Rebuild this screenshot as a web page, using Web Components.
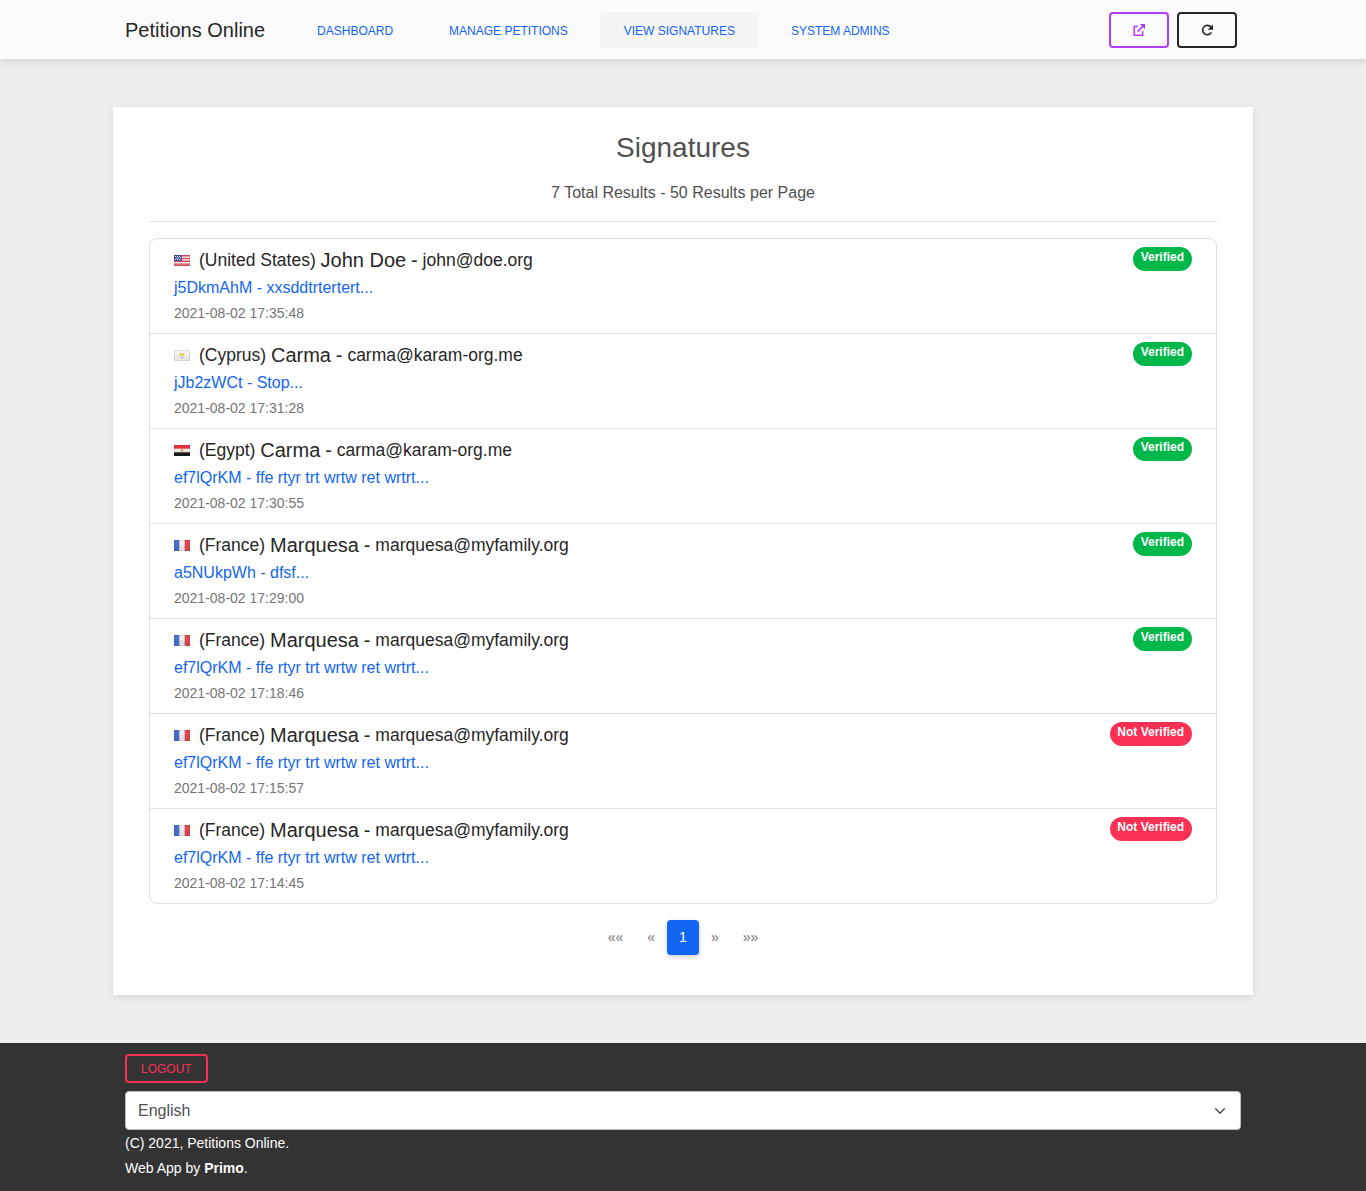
<!DOCTYPE html>
<html lang="en">
<head>
<meta charset="utf-8">
<title>Signatures - Petitions Online</title>
<style>
  html, body { margin: 0; padding: 0; }
  body {
    background: #eeeeee;
    font-family: "Liberation Sans", Arial, sans-serif;
    color: #4f4f4f;
    font-size: 16px;
  }
</style>
</head>
<body>
<app-navbar brand="Petitions Online">
  <nav-link href="#">Dashboard</nav-link>
  <nav-link href="#">Manage Petitions</nav-link>
  <nav-link href="#" active>View Signatures</nav-link>
  <nav-link href="#">System Admins</nav-link>
  <icon-button slot="actions" icon="external" color="#b23cfd"></icon-button>
  <icon-button slot="actions" icon="redo" color="#262626"></icon-button>
</app-navbar>

<signatures-card heading="Signatures" summary="7 Total Results - 50 Results per Page">
  <signature-row flag="us" country="United States" name="John Doe" email="john@doe.org" code="j5DkmAhM" petition="xxsddtrtertert..." date="2021-08-02 17:35:48" status="verified"></signature-row>
  <signature-row flag="cy" country="Cyprus" name="Carma" email="carma@karam-org.me" code="jJb2zWCt" petition="Stop..." date="2021-08-02 17:31:28" status="verified"></signature-row>
  <signature-row flag="eg" country="Egypt" name="Carma" email="carma@karam-org.me" code="ef7lQrKM" petition="ffe rtyr trt wrtw ret wrtrt..." date="2021-08-02 17:30:55" status="verified"></signature-row>
  <signature-row flag="fr" country="France" name="Marquesa" email="marquesa@myfamily.org" code="a5NUkpWh" petition="dfsf..." date="2021-08-02 17:29:00" status="verified"></signature-row>
  <signature-row flag="fr" country="France" name="Marquesa" email="marquesa@myfamily.org" code="ef7lQrKM" petition="ffe rtyr trt wrtw ret wrtrt..." date="2021-08-02 17:18:46" status="verified"></signature-row>
  <signature-row flag="fr" country="France" name="Marquesa" email="marquesa@myfamily.org" code="ef7lQrKM" petition="ffe rtyr trt wrtw ret wrtrt..." date="2021-08-02 17:15:57" status="unverified"></signature-row>
  <signature-row flag="fr" country="France" name="Marquesa" email="marquesa@myfamily.org" code="ef7lQrKM" petition="ffe rtyr trt wrtw ret wrtrt..." date="2021-08-02 17:14:45" status="unverified"></signature-row>
  <page-nav slot="pager"></page-nav>
</signatures-card>

<app-footer></app-footer>

<script>
// Barra superior
class AppNavbar extends HTMLElement {
  constructor() {
    super();
    this.attachShadow({ mode: 'open' });
  }
  connectedCallback() {
    this.shadowRoot.innerHTML = `
      <style>
        :host {
          display: block;
          height: 59px;
          background: #fbfbfb;
          box-shadow: 0 4px 12px 0 rgba(0,0,0,.07), 0 2px 4px rgba(0,0,0,.05);
          position: relative;
        }
        .bar {
          width: 1116px;
          height: 100%;
          margin: 0 auto;
          display: flex;
          align-items: center;
        }
        .brand { font-size: 20px; line-height: 24px; padding-top: 1px; color: #262626; margin-right: 28px; white-space: nowrap; }
        .links { display: flex; gap: 8px; flex: 1; }
        .actions { display: flex; gap: 8px; margin-right: 4px; }
      </style>
      <div class="bar">
        <span class="brand">${this.getAttribute('brand')}</span>
        <div class="links"><slot></slot></div>
        <div class="actions"><slot name="actions"></slot></div>
      </div>`;
  }
}
customElements.define('app-navbar', AppNavbar);

class NavLink extends HTMLElement {
  constructor() {
    super();
    this.attachShadow({ mode: 'open' });
    this.shadowRoot.innerHTML = `
      <style>
        :host { display: block; }
        a {
          display: block;
          height: 36px;
          line-height: 38px;
          padding: 0 24px;
          border-radius: 4px;
          font-size: 12px;
          text-transform: uppercase;
          color: #1266f1;
          text-decoration: none;
          white-space: nowrap;
        }
        :host([active]) a { background: #f5f5f5; }
      </style>
      <a href="#"><slot></slot></a>`;
  }
}
customElements.define('nav-link', NavLink);

class IconButton extends HTMLElement {
  constructor() {
    super();
    this.attachShadow({ mode: 'open' });
  }
  connectedCallback() {
    const icons = {
      external: `<path d="M5 2.4H1.2V11.2H9.6V7" fill="none" stroke-width="1.5"/><path d="M4.6 7.6L10.8 1.2" fill="none" stroke-width="1.6"/><path d="M6.8 0H12V5.2z" stroke="none"/>`,
      redo: `<path d="M10 3.1A4.7 4.7 0 1 0 10.4 8.4" fill="none" stroke-width="1.6"/><path d="M12 .4V5.7H6.7z" stroke="none"/>`
    };
    const color = this.getAttribute('color');
    this.shadowRoot.innerHTML = `
      <style>
        :host {
          display: flex;
          align-items: center;
          justify-content: center;
          box-sizing: border-box;
          width: 60px;
          height: 36px;
          border: 2px solid ${color};
          border-radius: 4px;
        }
        svg { width: 12px; height: 12px; fill: ${color}; stroke: ${color}; display: block; }
      </style>
      <svg viewBox="0 0 12 12">${icons[this.getAttribute('icon')]}</svg>`;
  }
}
customElements.define('icon-button', IconButton);

// Tarjeta con la lista de firmas
class SignaturesCard extends HTMLElement {
  constructor() {
    super();
    this.attachShadow({ mode: 'open' });
  }
  connectedCallback() {
    this.shadowRoot.innerHTML = `
      <style>
        :host {
          display: block;
          box-sizing: border-box;
          width: 1140px;
          margin: 48px auto;
          padding: 24px 36px 40px;
          background: #fff;
          box-shadow: 0 2px 10px 0 rgba(0,0,0,.07), 0 2px 4px rgba(0,0,0,.04);
        }
        h2 {
          margin: 0;
          font-size: 28px;
          font-weight: 400;
          line-height: 34px;
          text-align: center;
          color: #4f4f4f;
        }
        p {
          margin: 16px 0 0;
          font-size: 16px;
          line-height: 24px;
          text-align: center;
          color: #4f4f4f;
        }
        hr { margin: 16px 0; border: 0; border-top: 1px solid #e0e0e0; }
        .list {
          border: 1px solid #e0e0e0;
          border-radius: 8px;
          display: flex;
          flex-direction: column;
        }
        ::slotted(signature-row:not(:last-of-type)) { border-bottom: 1px solid #e0e0e0; }
      </style>
      <h2>${this.getAttribute('heading')}</h2>
      <p>${this.getAttribute('summary')}</p>
      <hr>
      <div class="list"><slot></slot></div>
      <slot name="pager"></slot>`;
  }
}
customElements.define('signatures-card', SignaturesCard);

class FlagIcon extends HTMLElement {
  constructor() {
    super();
    this.attachShadow({ mode: 'open' });
  }
  connectedCallback() {
    const flags = {
      us: `<rect width="16" height="11" fill="#f7f4f5"/>
           <path d="M0 0h16v1.4H0zM0 2.8h16v1.4H0zM0 5.6h16v1.4H0zM0 8.4h16v1.4H0z" fill="#e4505c"/>
           <path d="M0 9.6h16V11H0z" fill="#e8606a"/>
           <rect width="8" height="6" fill="#47519c"/>
           <path d="M1 1h1v1H1zM3 1h1v1H3zM5 1h1v1H5zM2 2.5h1v1H2zM4 2.5h1v1H4zM6 2.5h1v1H6zM1 4h1v1H1zM3 4h1v1H3zM5 4h1v1H5z" fill="#dfe6fb"/>`,
      cy: `<rect width="16" height="11" fill="#f4f4f2"/>
           <path d="M4.5 3.4h6.6L9.6 5.6H6.2z" fill="#f0bd45"/>
           <path d="M6 6.4l2 2.2 2-2.2-2 .8z" fill="#8fb36a"/>`,
      eg: `<rect width="16" height="11" fill="#f6f4f2"/>
           <rect width="16" height="3.7" fill="#e8313a"/>
           <rect y="7.3" width="16" height="3.7" fill="#1c1c1c"/>
           <path d="M8 3.6l1.4 1v1.6L8 7.2 6.6 6.2V4.6z" fill="#e3b84e"/>`,
      fr: `<rect width="16" height="11" fill="#eceef2"/>
           <rect width="5.3" height="11" fill="#4a70cc"/>
           <rect x="10.7" width="5.3" height="11" fill="#e4484f"/>`
    };
    this.shadowRoot.innerHTML = `
      <style>
        :host { display: inline-block; width: 16px; height: 11px; white-space: normal; }
        svg { display: block; width: 16px; height: 11px; }
      </style>
      <svg viewBox="0 0 16 11">${flags[this.getAttribute('code')]}
        <rect y="5.5" width="16" height="5.5" fill="#000" fill-opacity=".05"/>
        <rect width="16" height="11" fill="none" stroke="#000" stroke-opacity=".14" stroke-width="1"/>
      </svg>`;
  }
}
customElements.define('flag-icon', FlagIcon);

class StatusBadge extends HTMLElement {
  constructor() {
    super();
    this.attachShadow({ mode: 'open' });
    this.shadowRoot.innerHTML = `
      <style>
        :host {
          display: block;
          box-sizing: border-box;
          height: 24px;
          padding: 3px 8px 0;
          border-radius: 12px;
          background: #00b74a;
          color: #fff;
          font-size: 12px;
          font-weight: 700;
          line-height: 14px;
          white-space: nowrap;
        }
        :host([danger]) { background: #f93154; padding-left: 7px; }
      </style>
      <slot></slot>`;
  }
}
customElements.define('status-badge', StatusBadge);

class SignatureRow extends HTMLElement {
  constructor() {
    super();
    this.attachShadow({ mode: 'open' });
  }
  connectedCallback() {
    const a = (n) => this.getAttribute(n);
    const ok = a('status') === 'verified';
    this.shadowRoot.innerHTML = `
      <style>
        :host {
          display: flex;
          justify-content: space-between;
          align-items: flex-start;
          padding: 9px 24px;
        }
        .title {
          display: flex;
          align-items: center;
          height: 24px;
          font-size: 17.5px;
          color: #262626;
          white-space: pre;
        }
        flag-icon { margin: 1px 9px 0 0; }
        .name, .dash { font-size: 20px; }
        .link {
          display: block;
          margin-top: 4px;
          line-height: 24px;
          font-size: 16px;
          color: #1266f1;
          text-decoration: none;
        }
        .date { margin-top: 2px; line-height: 22px; font-size: 14px; color: #757575; }
        status-badge { margin-top: -1px; }
      </style>
      <div>
        <div class="title"><flag-icon code="${a('flag')}"></flag-icon><span>(${a('country')}) </span><span class="name">${a('name')}</span><span> </span><span class="dash">-</span><span> ${a('email')}</span></div>
        <a class="link" href="#">${a('code')} - ${a('petition')}</a>
        <div class="date">${a('date')}</div>
      </div>
      <status-badge ${ok ? '' : 'danger'}>${ok ? 'Verified' : 'Not Verified'}</status-badge>`;
  }
}
customElements.define('signature-row', SignatureRow);

class PageNav extends HTMLElement {
  constructor() {
    super();
    this.attachShadow({ mode: 'open' });
    this.shadowRoot.innerHTML = `
      <style>
        :host {
          display: flex;
          justify-content: center;
          margin-top: 16px;
          height: 35px;
        }
        span {
          display: block;
          padding: 0 12px;
          line-height: 34px;
          font-size: 14px;
          color: #757575;
        }
        .current {
          width: 32px;
          box-sizing: border-box;
          padding: 0;
          text-align: center;
          border-radius: 4px;
          background: #1266f1;
          color: #fff;
          box-shadow: 0 2px 5px rgba(0,0,0,.2);
        }
      </style>
      <span>««</span><span>«</span><span class="current">1</span><span>»</span><span>»»</span>`;
  }
}
customElements.define('page-nav', PageNav);

class AppFooter extends HTMLElement {
  constructor() {
    super();
    this.attachShadow({ mode: 'open' });
    this.shadowRoot.innerHTML = `
      <style>
        :host {
          display: block;
          height: 148px;
          box-sizing: border-box;
          padding: 11px 125px 0;
          background: #333;
          color: #fff;
          font-size: 14px;
        }
        .logout {
          display: inline-block;
          box-sizing: border-box;
          height: 29px;
          padding: 0 14px;
          line-height: 27px;
          border: 2px solid #f93154;
          border-radius: 4px;
          color: #f93154;
          font-size: 12px;
          text-transform: uppercase;
          vertical-align: top;
        }
        .select {
          display: flex;
          align-items: center;
          justify-content: space-between;
          box-sizing: border-box;
          width: 1116px;
          height: 39px;
          margin-top: 8px;
          padding: 0 15px 0 12px;
          background: #fff;
          border: 1px solid #bdbdbd;
          border-radius: 4px;
          color: #4f4f4f;
          font-size: 16px;
        }
        svg { display: block; width: 10px; height: 6px; }
        p { margin: 0; line-height: 25px; }
        .first { margin-top: 1px; }
      </style>
      <span class="logout">Logout</span>
      <div class="select">
        <span>English</span>
        <svg viewBox="0 0 10 6" fill="none" stroke="#4f4f4f" stroke-width="1.4" stroke-linecap="round" stroke-linejoin="round"><path d="M.7 .7L5 5.2 9.3 .7"/></svg>
      </div>
      <p class="first">(C) 2021, Petitions Online.</p>
      <p>Web App by <b>Primo</b>.</p>`;
  }
}
customElements.define('app-footer', AppFooter);
</script>
</body>
</html>
